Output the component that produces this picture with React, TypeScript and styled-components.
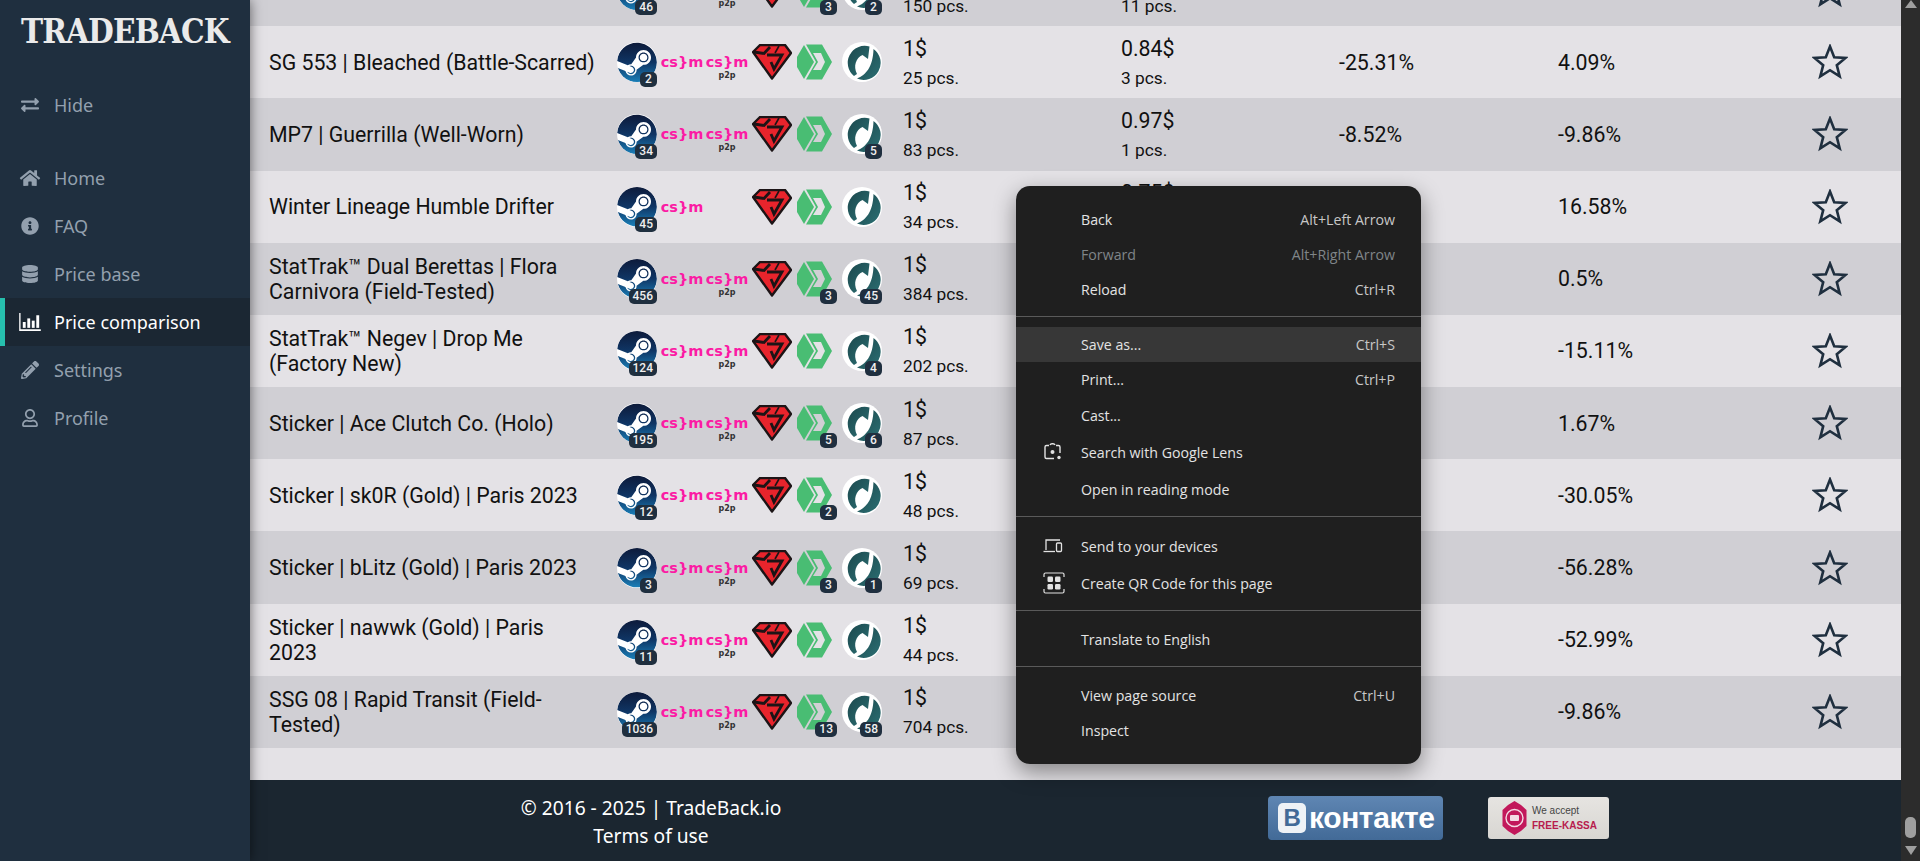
import React from 'react';
import styled, { createGlobalStyle } from 'styled-components';
import {
  FaExchangeAlt,
  FaHome,
  FaInfoCircle,
  FaDatabase,
  FaPencilAlt,
  FaRegUser,
  FaSteam,
} from 'react-icons/fa';

interface RowData {
  name: string;
  steam: string;
  noP2p?: boolean;
  green?: string;
  teal?: string;
  price: string;
  pcs: string;
  price2?: string;
  pcs2?: string;
  pct1?: string;
  pct2?: string;
}

const rows: RowData[] = [
  { name: '', steam: '46', green: '3', teal: '2', price: '1$', pcs: '150 pcs.', price2: '0.9$', pcs2: '11 pcs.' },
  { name: 'SG 553 | Bleached (Battle-Scarred)', steam: '2', price: '1$', pcs: '25 pcs.', price2: '0.84$', pcs2: '3 pcs.', pct1: '-25.31%', pct2: '4.09%' },
  { name: 'MP7 | Guerrilla (Well-Worn)', steam: '34', teal: '5', price: '1$', pcs: '83 pcs.', price2: '0.97$', pcs2: '1 pcs.', pct1: '-8.52%', pct2: '-9.86%' },
  { name: 'Winter Lineage Humble Drifter', steam: '45', noP2p: true, price: '1$', pcs: '34 pcs.', price2: '0.75$', pct2: '16.58%' },
  { name: 'StatTrak™ Dual Berettas | Flora Carnivora (Field-Tested)', steam: '456', green: '3', teal: '45', price: '1$', pcs: '384 pcs.', pct2: '0.5%' },
  { name: 'StatTrak™ Negev | Drop Me (Factory New)', steam: '124', teal: '4', price: '1$', pcs: '202 pcs.', pct2: '-15.11%' },
  { name: 'Sticker | Ace Clutch Co. (Holo)', steam: '195', green: '5', teal: '6', price: '1$', pcs: '87 pcs.', pct2: '1.67%' },
  { name: 'Sticker | sk0R (Gold) | Paris 2023', steam: '12', green: '2', price: '1$', pcs: '48 pcs.', pct2: '-30.05%' },
  { name: 'Sticker | bLitz (Gold) | Paris 2023', steam: '3', green: '3', teal: '1', price: '1$', pcs: '69 pcs.', pct2: '-56.28%' },
  { name: 'Sticker | nawwk (Gold) | Paris 2023', steam: '11', price: '1$', pcs: '44 pcs.', pct2: '-52.99%' },
  { name: 'SSG 08 | Rapid Transit (Field-Tested)', steam: '1036', green: '13', teal: '58', price: '1$', pcs: '704 pcs.', pct2: '-9.86%' },
];

const GlobalStyle = createGlobalStyle`
  html, body {
    margin: 0;
    height: 100%;
    overflow: hidden;
    background: #e4e2e6;
    font-family: Roboto, "Liberation Sans", sans-serif;
  }
  * { box-sizing: border-box; }
`;

const Page = styled.div`
  display: flex;
  width: 1920px;
  height: 861px;
  position: relative;
`;

const Sidebar = styled.aside`
  width: 250px;
  flex-shrink: 0;
  background: #1f2f3f;
  box-shadow: 0 0 12px rgba(0, 0, 0, 0.55);
  position: relative;
  z-index: 2;
`;

const Logo = styled.div`
  height: 81px;
  padding: 13px 0 0 21px;
  font-family: "DejaVu Serif Condensed", "DejaVu Serif", serif;
  font-weight: 700;
  font-size: 33px;
  line-height: 38px;
  letter-spacing: -0.9px;
  color: #eaeaea;
`;

const NavItem = styled.a<{ $active?: boolean; $gap?: boolean }>`
  display: flex;
  align-items: center;
  height: 48px;
  margin-bottom: ${p => (p.$gap ? '25px' : '0')};
  padding-left: ${p => (p.$active ? '14px' : '19px')};
  border-left: ${p => (p.$active ? '5px solid #26bfad' : 'none')};
  background: ${p => (p.$active ? '#1b2733' : 'transparent')};
  color: ${p => (p.$active ? '#ffffff' : '#93a0ae')};
  font-family: "Noto Sans", sans-serif;
  font-size: 18px;
  svg {
    width: 22px;
    height: 18px;
    flex-shrink: 0;
    margin-right: 13px;
  }
`;

const Main = styled.main`
  flex: 1;
  min-width: 0;
  display: flex;
  flex-direction: column;
`;

const TableArea = styled.div`
  flex: 1;
  min-height: 0;
  overflow: hidden;
  display: flex;
  flex-direction: column;
  justify-content: flex-end;
  padding-bottom: 32px;
  background: #e4e2e6;
`;

const Row = styled.div<{ $dark: boolean }>`
  flex-shrink: 0;
  height: 72.2px;
  display: grid;
  grid-template-columns: 348px 286px 218px 218px 219px 232px 1fr;
  align-items: center;
  padding-left: 19px;
  background: ${p => (p.$dark ? '#d0cfd4' : '#e4e2e6')};
  color: #111;
  font-size: 21.3px;
`;

const Name = styled.div`
  line-height: 25px;
  padding-right: 22px;
`;

const Icons = styled.div`
  display: flex;
  align-items: center;
  gap: 5px;
`;

const IconSlot = styled.div`
  position: relative;
  width: 40px;
  height: 40px;
  display: flex;
  align-items: center;
  justify-content: center;
  flex-shrink: 0;
`;

const Badge = styled.span`
  position: absolute;
  right: 0;
  bottom: -5px;
  min-width: 17px;
  height: 15px;
  padding: 0 4px;
  border-radius: 5px;
  background: #1f2f3f;
  color: #f0f0f0;
  font-size: 12px;
  font-weight: 500;
  line-height: 15px;
  text-align: center;
`;

const SteamDisc = styled.div`
  width: 40px;
  height: 40px;
  border-radius: 50%;
  background: #fff;
  display: flex;
  align-items: center;
  justify-content: center;
  overflow: hidden;
  svg {
    width: 40px;
    height: 41px;
    display: block;
  }
`;

const CsWord = styled.span`
  font-family: "DejaVu Sans", sans-serif;
  font-weight: 700;
  font-size: 14.5px;
  color: #fb1ba4;
  line-height: 16px;
`;

const CsStack = styled.div`
  display: flex;
  flex-direction: column;
  align-items: center;
  margin-top: 9px;
`;

const P2p = styled.span`
  font-family: "DejaVu Sans", sans-serif;
  font-weight: 700;
  font-size: 8px;
  line-height: 7px;
  margin-top: 2px;
  color: #333;
`;

const Price = styled.div`
  display: flex;
  flex-direction: column;
  padding-top: 2px;
`;

const PriceLine = styled.span`
  font-size: 21.3px;
  line-height: 29px;
`;

const Pcs = styled.span`
  font-size: 17.3px;
  line-height: 30px;
  min-height: 30px;
`;

const Percent = styled.div`
  font-size: 21.3px;
`;

const StarCell = styled.div`
  display: flex;
  justify-content: flex-end;
  padding-right: 53px;
`;

const Footer = styled.footer`
  height: 81px;
  flex-shrink: 0;
  background: #1b2630;
  display: flex;
  align-items: flex-start;
`;

const FooterText = styled.div`
  width: 802px;
  padding-top: 14px;
  text-align: center;
  color: #fff;
  font-family: "Noto Sans", sans-serif;
  font-size: 19.2px;
  line-height: 28px;
`;

const FooterBadges = styled.div`
  margin-left: 216px;
  padding-top: 16px;
  display: flex;
  align-items: center;
  gap: 45px;
`;

const VkBadge = styled.div`
  width: 175px;
  height: 44px;
  border-radius: 4px;
  background: linear-gradient(#5f86b3, #426a97);
  display: flex;
  align-items: center;
  padding-left: 10px;
  gap: 3px;
  color: #fff;
  font-family: "Liberation Sans", sans-serif;
  font-weight: 700;
  font-size: 30px;
  letter-spacing: -0.4px;
`;

const VkSquare = styled.span`
  width: 28px;
  height: 30px;
  border-radius: 5px;
  background: #eef2f6;
  color: #426a97;
  display: flex;
  align-items: center;
  justify-content: center;
  font-size: 24px;
`;

const KassaBadge = styled.div`
  width: 121px;
  height: 42px;
  border-radius: 3px;
  background: linear-gradient(#e6e4e1, #d8d6d2);
  display: flex;
  align-items: center;
  padding-left: 14px;
  gap: 5px;
`;

const KassaText = styled.div`
  display: flex;
  flex-direction: column;
  font-family: "Liberation Sans", sans-serif;
  font-size: 10px;
  line-height: 15px;
  color: #444;
  b {
    color: #b71c4e;
    font-size: 10px;
  }
`;

const Scrollbar = styled.div`
  width: 19px;
  flex-shrink: 0;
  background: #2c2c2c;
  display: flex;
  flex-direction: column;
  align-items: center;
`;

const ArrowUp = styled.div`
  width: 0;
  height: 0;
  border-left: 6px solid transparent;
  border-right: 6px solid transparent;
  border-bottom: 8px solid #9f9f9f;
  margin-bottom: auto;
`;

const Thumb = styled.div`
  width: 11px;
  height: 21px;
  border-radius: 5px;
  background: #9f9f9f;
  margin-bottom: 8px;
`;

const ArrowDown = styled.div`
  width: 0;
  height: 0;
  border-left: 6px solid transparent;
  border-right: 6px solid transparent;
  border-top: 9px solid #9f9f9f;
  margin-bottom: 6px;
`;

const Menu = styled.div`
  position: absolute;
  left: 1016px;
  top: 186px;
  width: 405px;
  height: 578px;
  padding-top: 15.5px;
  background: #1f1f1f;
  border-radius: 14px;
  box-shadow: 0 8px 22px rgba(0, 0, 0, 0.42);
  z-index: 5;
  font-family: "Open Sans", "Noto Sans", sans-serif;
  font-size: 14.2px;
`;

const MenuItem = styled.div<{ $hover?: boolean; $off?: boolean; $h?: number; $pt?: number }>`
  height: ${p => p.$h ?? 35.2}px;
  display: flex;
  align-items: center;
  justify-content: space-between;
  padding: ${p => p.$pt ?? 0}px 26px 0 65px;
  position: relative;
  background: ${p => (p.$hover ? '#373737' : 'transparent')};
  color: ${p => (p.$off ? '#7f8589' : '#e3e3e3')};
`;

const MenuIcon = styled.span`
  position: absolute;
  left: 27px;
  top: 50%;
  transform: translateY(-50%);
  display: flex;
  svg { display: block; }
`;

const Shortcut = styled.span<{ $off?: boolean }>`
  color: ${p => (p.$off ? '#7f8589' : '#c7c7c7')};
`;

const Sep = styled.div<{ $before?: number; $after?: number }>`
  height: 1px;
  background: #5a5a5a;
  margin: ${p => p.$before ?? 8}px 0 ${p => p.$after ?? 11}px;
`;

const GemLogo = () => (
  <svg width="40" height="36" viewBox="0 0 40 36">
    <polygon points="1,8 8,1 33,1 39,9 20,34.5" fill="#e8242c" stroke="#1c1416" strokeWidth="2.4" strokeLinejoin="round" />
    <path d="M2 8 L12 9.5 L18 3 M15 11 H30 L22 25 L19 18" fill="none" stroke="#1c1416" strokeWidth="2.8" />
    <path d="M27 2 L23 9" fill="none" stroke="#1c1416" strokeWidth="1.6" />
  </svg>
);

const GreenLogo = () => (
  <svg width="40" height="36" viewBox="0 0 40 36">
    <path d="M0 13 L7 1 L17 18 L7 35 L0 23 Z" fill="#49bd73" />
    <path
      d="M9 0.5 H25 L35 18 L25 35.5 H9 L19 18 Z M16 9 L21 18 L16 26 H24 L28 18 L24 9 Z"
      fill="#49bd73"
      fillRule="evenodd"
    />
  </svg>
);

const TealLogo = () => (
  <svg width="40" height="40" viewBox="0 0 40 40">
    <circle cx="20" cy="20" r="20" fill="#fff" />
    <path d="M12 34 A17 17 0 0 1 27.5 4.5 L26 17 L20.5 13 C14 16 11 24 15 32 Z" fill="url(#tealGrad)" />
    <path d="M31.5 7 A17 17 0 0 1 15 36.5 C24 33 31 25 31.5 7 Z" fill="url(#tealGrad)" />
  </svg>
);

const StarIcon = () => (
  <svg width="36" height="36" viewBox="0 0 36 36">
    <polygon
      points="18,2.5 22.2,13.2 33.5,13.9 24.8,21.2 27.7,32.4 18,26.2 8.3,32.4 11.2,21.2 2.5,13.9 13.8,13.2"
      fill="none"
      stroke="#1f2f3f"
      strokeWidth="2.6"
    />
  </svg>
);

const BarsIcon = () => (
  <svg viewBox="0 0 24 20" fill="currentColor">
    <path d="M0 0h1.5v18H24v2H0z" />
    <rect x="4" y="10" width="3.2" height="6.5" />
    <rect x="9" y="6" width="3.2" height="10.5" />
    <rect x="14" y="8.5" width="3.2" height="8" />
    <rect x="19" y="2.5" width="3.2" height="14" />
  </svg>
);

const LensIcon = () => (
  <svg width="20" height="20" viewBox="0 0 20 20" fill="none" stroke="#e3e3e3" strokeWidth="1.4">
    <path d="M6 3.5 H3.5 Q2 3.5 2 5 V15 Q2 16.5 3.5 16.5 H11 M13 3.5 H15.5 Q17 3.5 17 5 V11" />
    <path d="M7 3 Q7.5 1.8 9 1.8 H10 Q11.5 1.8 12 3" />
    <circle cx="9.5" cy="10" r="2" fill="#e3e3e3" stroke="none" />
    <circle cx="16" cy="15.5" r="1.7" fill="#e3e3e3" stroke="none" />
  </svg>
);

const DevicesIcon = () => (
  <svg width="20" height="16" viewBox="0 0 20 16" fill="none" stroke="#e3e3e3" strokeWidth="1.3">
    <path d="M3 12 V2 H17" />
    <path d="M0.5 13.5 H12" />
    <rect x="13.5" y="5" width="5" height="8.5" rx="1" />
  </svg>
);

const QrIcon = () => (
  <svg width="22" height="22" viewBox="0 0 22 22" fill="none" stroke="#e3e3e3" strokeWidth="1.2">
    <path d="M1 5 V2.5 Q1 1 2.5 1 H19.5 Q21 1 21 2.5 V5 M1 17 V19.5 Q1 21 2.5 21 H19.5 Q21 21 21 19.5 V17" />
    <g fill="#e3e3e3" stroke="none">
      <rect x="4.5" y="4.5" width="5.5" height="5.5" rx="1.2" />
      <rect x="12" y="4.5" width="5.5" height="5.5" rx="1.2" />
      <rect x="4.5" y="12" width="5.5" height="5.5" rx="1.2" />
      <rect x="12" y="12" width="5.5" height="5.5" rx="1.2" />
    </g>
  </svg>
);

const KassaSeal = () => (
  <svg width="25" height="34" viewBox="0 0 25 34">
    <polygon points="12.5,0 19,4 24.5,9 24.5,25 19,30 12.5,34 6,30 0.5,25 0.5,9 6,4" fill="#c2185b" />
    <circle cx="12.5" cy="17" r="8.5" fill="none" stroke="#f3dbe4" strokeWidth="1.4" />
    <rect x="8" y="14" width="9" height="6" rx="1" fill="#f3dbe4" />
  </svg>
);

const TableRow: React.FC<{ row: RowData; dark: boolean }> = ({ row, dark }) => (
  <Row $dark={dark}>
    <Name>{row.name}</Name>
    <Icons>
      <IconSlot>
        <SteamDisc>
          <FaSteam fill="url(#steamGrad)" />
        </SteamDisc>
        <Badge>{row.steam}</Badge>
      </IconSlot>
      <IconSlot>
        <CsWord>{'cs}m'}</CsWord>
      </IconSlot>
      <IconSlot>
        {!row.noP2p && (
          <CsStack>
            <CsWord>{'cs}m'}</CsWord>
            <P2p>p2p</P2p>
          </CsStack>
        )}
      </IconSlot>
      <IconSlot>
        <GemLogo />
      </IconSlot>
      <IconSlot>
        <GreenLogo />
        {row.green && <Badge>{row.green}</Badge>}
      </IconSlot>
      <IconSlot>
        <TealLogo />
        {row.teal && <Badge>{row.teal}</Badge>}
      </IconSlot>
    </Icons>
    <Price>
      <PriceLine>{row.price}</PriceLine>
      <Pcs>{row.pcs}</Pcs>
    </Price>
    <Price>
      <PriceLine>{row.price2}</PriceLine>
      <Pcs>{row.pcs2}</Pcs>
    </Price>
    <Percent>{row.pct1}</Percent>
    <Percent>{row.pct2}</Percent>
    <StarCell>
      <StarIcon />
    </StarCell>
  </Row>
);

export default function App() {
  return (
    <Page>
      <GlobalStyle />
      <svg width="0" height="0" style={{ position: 'absolute' }}>
        <defs>
          <linearGradient id="steamGrad" x1="0" y1="0" x2="0" y2="1">
            <stop offset="0" stopColor="#0d1a3a" />
            <stop offset="0.5" stopColor="#0f3564" />
            <stop offset="1" stopColor="#1a7fb8" />
          </linearGradient>
          <linearGradient id="tealGrad" x1="0" y1="0" x2="1" y2="1">
            <stop offset="0" stopColor="#1b474c" />
            <stop offset="1" stopColor="#2c7074" />
          </linearGradient>
        </defs>
      </svg>

      <Sidebar>
        <Logo>TRADEBACK</Logo>
        <NavItem $gap><FaExchangeAlt />Hide</NavItem>
        <NavItem><FaHome />Home</NavItem>
        <NavItem><FaInfoCircle />FAQ</NavItem>
        <NavItem><FaDatabase />Price base</NavItem>
        <NavItem $active><BarsIcon />Price comparison</NavItem>
        <NavItem><FaPencilAlt />Settings</NavItem>
        <NavItem><FaRegUser />Profile</NavItem>
      </Sidebar>

      <Main>
        <TableArea>
          {rows.map((row, i) => (
            <TableRow key={row.steam + i} row={row} dark={i % 2 === 0} />
          ))}
        </TableArea>
        <Footer>
          <FooterText>
            © 2016 - 2025 | TradeBack.io
            <br />
            Terms of use
          </FooterText>
          <FooterBadges>
            <VkBadge>
              <VkSquare>В</VkSquare>
              контакте
            </VkBadge>
            <KassaBadge>
              <KassaSeal />
              <KassaText>
                We accept
                <b>FREE-KASSA</b>
              </KassaText>
            </KassaBadge>
          </FooterBadges>
        </Footer>
      </Main>

      <Scrollbar>
        <ArrowUp />
        <Thumb />
        <ArrowDown />
      </Scrollbar>

      <Menu>
        <MenuItem>Back<Shortcut>Alt+Left Arrow</Shortcut></MenuItem>
        <MenuItem $off>Forward<Shortcut $off>Alt+Right Arrow</Shortcut></MenuItem>
        <MenuItem>Reload<Shortcut>Ctrl+R</Shortcut></MenuItem>
        <Sep $before={9} $after={10} />
        <MenuItem $hover>Save as...<Shortcut>Ctrl+S</Shortcut></MenuItem>
        <MenuItem>Print...<Shortcut>Ctrl+P</Shortcut></MenuItem>
        <MenuItem>Cast...</MenuItem>
        <MenuItem $h={38} $pt={2}><MenuIcon><LensIcon /></MenuIcon>Search with Google Lens</MenuItem>
        <MenuItem $h={37}>Open in reading mode</MenuItem>
        <Sep />
        <MenuItem $h={37}><MenuIcon><DevicesIcon /></MenuIcon>Send to your devices</MenuItem>
        <MenuItem $h={37}><MenuIcon><QrIcon /></MenuIcon>Create QR Code for this page</MenuItem>
        <Sep />
        <MenuItem>Translate to English</MenuItem>
        <Sep $before={9} />
        <MenuItem>View page source<Shortcut>Ctrl+U</Shortcut></MenuItem>
        <MenuItem>Inspect</MenuItem>
      </Menu>
    </Page>
  );
}
